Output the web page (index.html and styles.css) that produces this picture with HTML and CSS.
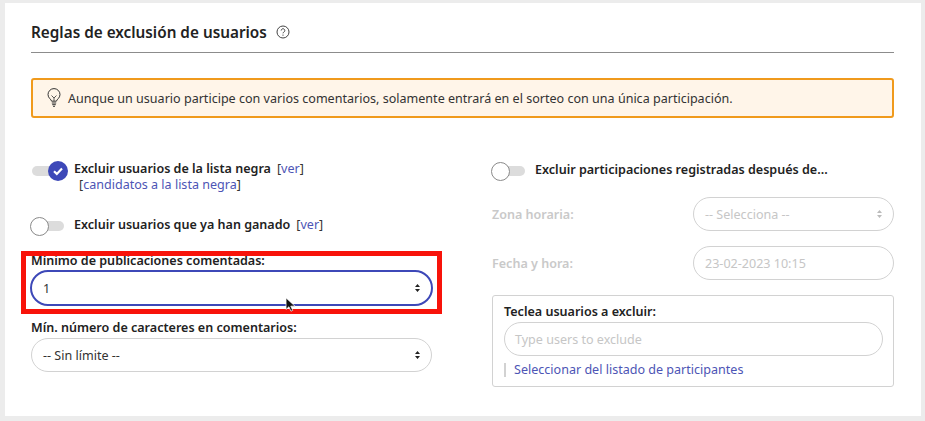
FILE: index.html
```html
<!DOCTYPE html>
<html lang="es">
<head>
<meta charset="utf-8">
<title>Reglas de exclusión de usuarios</title>
<link rel="stylesheet" href="styles.css">
</head>
<body>
<main class="card">
  <header class="head">
    <h2 class="title">Reglas de exclusión de usuarios</h2>
    <svg class="help" viewBox="0 0 14 14" width="14" height="14" aria-hidden="true"><circle cx="7" cy="7" r="6" fill="none" stroke="#444" stroke-width="1"/><path d="M5.2 5.5a1.8 1.8 0 1 1 2.7 1.6c-.6.3-.9.6-.9 1.2" fill="none" stroke="#444" stroke-width="1"/><circle cx="7" cy="10.1" r=".7" fill="#444"/></svg>
  </header>
  <div class="alert">
    <svg class="bulb" viewBox="0 0 16 20" width="16" height="20" aria-hidden="true"><path d="M5.6 13.2C5.3 11.4 2 10 2 6.6a6 6 0 0 1 12 0c0 3.4-3.3 4.8-3.6 6.6z" fill="none" stroke="#333" stroke-width="1"/><path d="M5.5 7.5L8 10l2.5-2.5M8 10v3" fill="none" stroke="#333" stroke-width=".8"/><path d="M5.8 15h4.4M6.2 16.7h3.6M7 18.3h2" stroke="#333" stroke-width="1"/></svg>
    <span>Aunque un usuario participe con varios comentarios, solamente entrará en el sorteo con una única participación.</span>
  </div>
  <div class="columns">
    <section class="col-left">
      <div class="switch-row first">
        <span class="switch on"><span class="knob"><svg viewBox="0 0 20 20" width="20" height="20" aria-hidden="true"><path d="M6 10.3l2.8 2.6L14 7.6" fill="none" stroke="#fff" stroke-width="2.2"/></svg></span></span>
        <div class="switch-text">
          <div><b>Excluir usuarios de la lista negra</b><a class="link gap">[<span class="blue">ver</span>]</a></div>
          <div class="sub">[<span class="blue">candidatos a la lista negra</span>]</div>
        </div>
      </div>
      <div class="switch-row second">
        <span class="switch"><span class="knob"></span></span>
        <div class="switch-text"><b>Excluir usuarios que ya han ganado</b><a class="link gap">[<span class="blue">ver</span>]</a></div>
      </div>
      <div class="field highlighted">
        <label class="label">Mínimo de publicaciones comentadas:</label>
        <div class="select focus"><span>1</span><svg class="arrows" viewBox="0 0 5 8" width="5" height="8" aria-hidden="true"><path d="M2.5 0L5 3H0zM2.5 8L0 5h5z" fill="#222"/></svg></div>
        <span class="redbox"></span>
        <svg class="cursor" viewBox="0 0 12 18" width="11" height="16" aria-hidden="true"><path d="M1 1v13l3.2-3 2.3 5 2-1-2.2-4.7H11z" fill="#111" stroke="#fff" stroke-width=".8"/></svg>
      </div>
      <div class="field last">
        <label class="label">Mín. número de caracteres en comentarios:</label>
        <div class="select"><span>-- Sin límite --</span><svg class="arrows" viewBox="0 0 5 8" width="5" height="8" aria-hidden="true"><path d="M2.5 0L5 3H0zM2.5 8L0 5h5z" fill="#222"/></svg></div>
      </div>
    </section>
    <section class="col-right">
      <div class="switch-row right-first">
        <span class="switch"><span class="knob"></span></span>
        <div class="switch-text"><b>Excluir participaciones registradas después de...</b></div>
      </div>
      <div class="row-disabled">
        <label class="label dim">Zona horaria:</label>
        <div class="select muted"><span>-- Selecciona --</span><svg class="arrows" viewBox="0 0 5 8" width="5" height="8" aria-hidden="true"><path d="M2.5 0L5 3H0zM2.5 8L0 5h5z" fill="#bbb"/></svg></div>
      </div>
      <div class="row-disabled second-dim">
        <label class="label dim">Fecha y hora:</label>
        <div class="select muted"><span>23-02-2023 10:15</span></div>
      </div>
      <div class="box">
        <label class="label">Teclea usuarios a excluir:</label>
        <div class="select muted inner"><span>Type users to exclude</span></div>
        <div class="pick"><span class="blue">Seleccionar del listado de participantes</span></div>
      </div>
    </section>
  </div>
</main>
</body>
</html>
```

FILE: styles.css
```css
* { box-sizing: border-box; }
html, body { height: 100%; }
body {
  margin: 0;
  padding: 3px 4px 4px 5px;
  background: #ececec;
  font-family: "Noto Sans", "Open Sans", sans-serif;
  font-size: 12.55px;
  color: #222;
  overflow: hidden;
}
.card {
  background: #fff;
  height: 413px;
  padding: 16px 27px 0 26px;
}
.head {
  display: flex;
  align-items: center;
  gap: 9px;
  height: 34px;
  border-bottom: 1px solid #8c8c8c;
  padding-bottom: 7px;
}
.title { margin: 0; font-size: 15.3px; font-weight: 600; color: #222; }
.help { flex: none; }
.alert {
  margin-top: 25px;
  height: 40px;
  display: flex;
  align-items: center;
  gap: 6px;
  padding-left: 13px;
  background: #fff5e9;
  border: 2px solid #f09a1c;
  border-radius: 3px;
  color: #333;
}
.bulb { flex: none; }
.columns {
  display: grid;
  grid-template-columns: 401px 402px;
  column-gap: 60px;
}
.switch-row { display: flex; align-items: flex-start; }
.switch {
  flex: none;
  position: relative;
  width: 33px;
  height: 10px;
  margin-top: 4px;
  background: #dcdcdc;
  border-radius: 5px;
  margin-right: 10px;
}
.knob {
  position: absolute;
  left: -1px;
  top: -4px;
  width: 19px;
  height: 19px;
  background: #fff;
  border: 1px solid #8a8a8a;
  border-radius: 50%;
}
.switch.on { margin-left: 1px; margin-right: 10px; width: 32px; margin-top: 5px; }
.switch.on .knob {
  left: auto;
  right: -4px;
  top: -5px;
  width: 20px;
  height: 20px;
  background: #3d48b8;
  border: 0;
}
.knob svg { display: block; }
.switch-text { line-height: 15px; }
.switch-text b { font-weight: 600; color: #222; }
.first { margin-top: 43px; }
.first .switch-text { line-height: 16px; }
.second { margin-top: 24px; }
.sub { margin: 0 0 0 5px; color: #333; }
.gap { margin-left: 6px; color: #333; }
.blue { color: #4d55b5; }
.field { position: relative; }
.highlighted { margin-top: 21px; }
.last { margin-top: 14px; }
.label { display: block; font-weight: 600; color: #222; line-height: 15px; }
.select {
  display: flex;
  align-items: center;
  justify-content: space-between;
  height: 34px;
  margin-top: 3px;
  padding: 0 11px;
  background: #fff;
  border: 1px solid #d2d2d2;
  border-radius: 17px;
  color: #333;
}
.focus {
  height: 36px;
  margin-top: 2px;
  margin-left: -1px;
  margin-right: -1px;
  border: 2px solid #3d48b8;
  border-radius: 18px;
  padding: 0 11px;
}
.arrows { flex: none; }
.redbox {
  position: absolute;
  left: -10px;
  right: -10px;
  top: -2px;
  bottom: -8px;
  border: 5px solid #f8130a;
  pointer-events: none;
}
.cursor { position: absolute; left: 254px; top: 44px; }
.right-first { margin-top: 43px; padding-top: 1px; }
.row-disabled {
  display: grid;
  grid-template-columns: 201px 1fr;
  align-items: center;
  margin-top: 20px;
}
.row-disabled .select { margin-top: 0; }
.second-dim { margin-top: 15px; }
.dim { color: #c9c9c9; }
.muted { color: #c6c6c6; }
.box {
  margin-top: 15px;
  height: 92px;
  padding: 8px 10px 0 11px;
  border: 1px solid #d2d2d2;
  border-radius: 3px;
}
.inner { margin-top: 3px; padding: 0 10px; }
.pick {
  margin-top: 7px;
  height: 14px;
  line-height: 14px;
  padding-left: 8px;
  border-left: 2px solid #d2d2d2;
}
```
